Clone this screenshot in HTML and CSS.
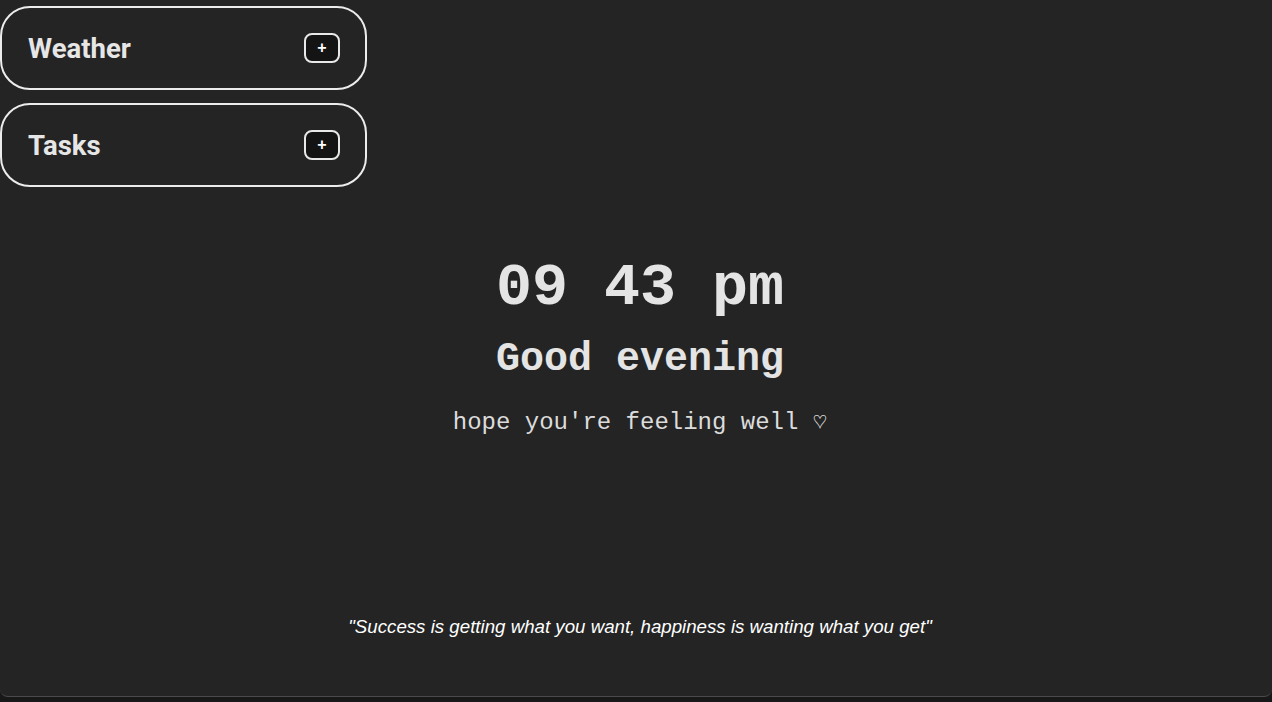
FILE: index.html
```html
<!DOCTYPE html>
<html>
<head>
<meta charset="utf-8">
<link rel="stylesheet" href="styles.css">
</head>
<body>
<div class="app">
  <div class="widgets">
    <div class="card">
      <h2 class="card-title">Weather</h2>
      <button class="add-btn">+</button>
    </div>
    <div class="card">
      <h2 class="card-title">Tasks</h2>
      <button class="add-btn">+</button>
    </div>
  </div>
  <div class="center">
    <div class="clock">09 43 pm</div>
    <div class="greeting">Good evening</div>
    <div class="sub">hope you're feeling well ♡</div>
  </div>
  <div class="quote">"Success is getting what you want, happiness is wanting what you get"</div>
</div>
</body>
</html>
```
FILE: styles.css
```css
html, body {
  margin: 0;
  padding: 0;
  background: #181818;
}
.app {
  box-sizing: border-box;
  height: 697px;
  background: #242424;
  border-bottom: 1px solid #4a4a4a;
  border-radius: 0 0 8px 8px;
  display: flex;
  flex-direction: column;
  padding-top: 6px;
}
.widgets {
  display: flex;
  flex-direction: column;
  gap: 13px;
}
.card {
  box-sizing: border-box;
  width: 367px;
  height: 84px;
  border: 2px solid #ececec;
  border-radius: 30px;
  display: flex;
  align-items: center;
  justify-content: space-between;
  padding: 0 25px 0 26px;
}
.card-title {
  margin: 0;
  font-family: Roboto, "Liberation Sans", sans-serif;
  font-weight: 700;
  font-size: 27.5px;
  color: #e6e6e6;
}
.add-btn {
  box-sizing: border-box;
  width: 36px;
  height: 30px;
  border: 2px solid #e8e8e8;
  border-radius: 8px;
  background: #141414;
  color: #ffffff;
  font-family: "Liberation Sans", Arial, sans-serif;
  font-weight: 700;
  font-size: 16px;
  line-height: 1;
  padding: 0 0 1px 0;
  display: flex;
  align-items: center;
  justify-content: center;
}
.center {
  display: flex;
  flex-direction: column;
  align-items: center;
  padding-left: 8px;
  margin-top: 67px;
  font-family: "Courier New", Courier, "Nimbus Mono PS", "Nimbus Mono L", FreeMono, "Liberation Mono", monospace;
  color: #e4e4e4;
}
.clock {
  font-size: 60px;
  font-weight: 700;
  line-height: 68px;
}
.greeting {
  font-size: 40px;
  font-weight: 700;
  line-height: 46px;
  margin-top: 15px;
}
.sub {
  font-size: 24px;
  line-height: 28px;
  margin-top: 26px;
  color: #dcdcdc;
}
.quote {
  margin-top: auto;
  margin-bottom: 58px;
  padding-left: 8px;
  text-align: center;
  font-family: "Liberation Sans", Arial, sans-serif;
  font-style: italic;
  font-size: 18.7px;
  color: #ffffff;
}
```
